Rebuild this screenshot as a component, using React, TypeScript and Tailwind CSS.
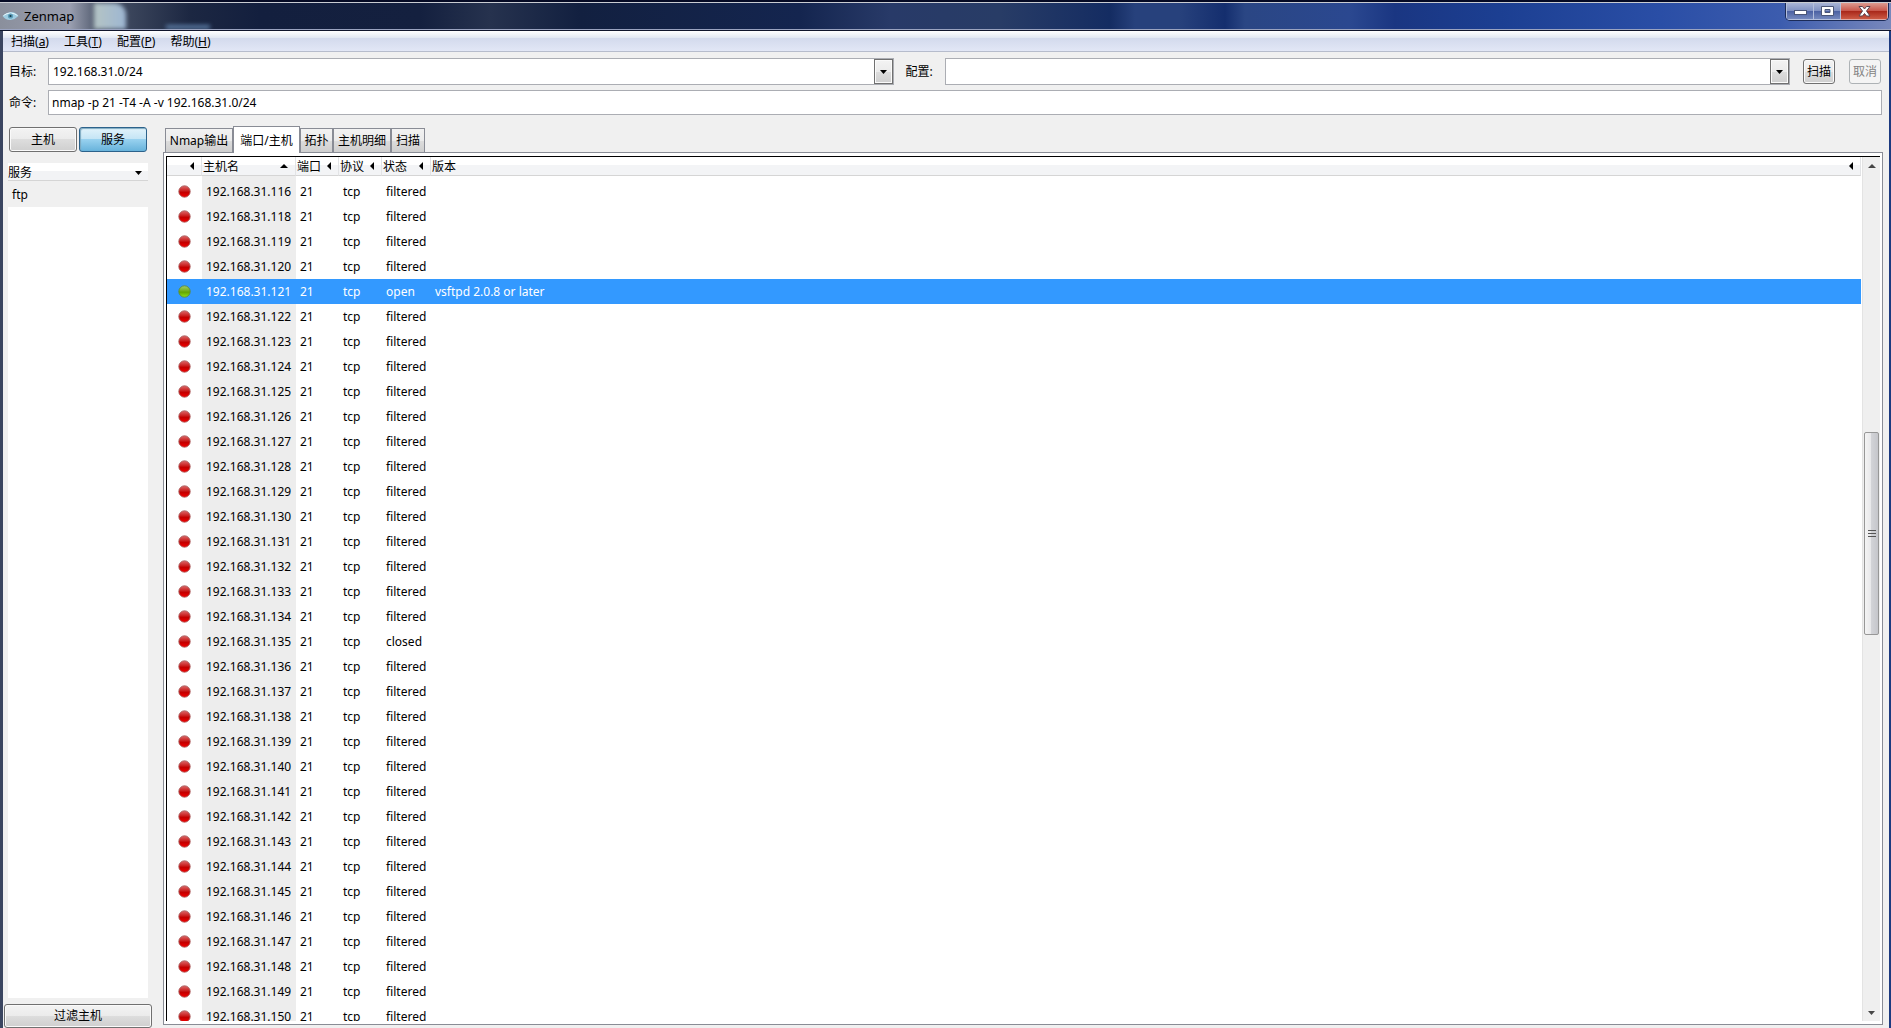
import React, { useState } from "react";

interface PortRow {
  host: string;
  port: string;
  protocol: string;
  state: string;
  version: string;
}

const rows: PortRow[] = [116, 118, 119, ...Array.from({ length: 31 }, (_, i) => 120 + i)].map((n) => ({
  host: `192.168.31.${n}`,
  port: "21",
  protocol: "tcp",
  state: n === 121 ? "open" : n === 135 ? "closed" : "filtered",
  version: n === 121 ? "vsftpd 2.0.8 or later" : "",
}));

const menus = [
  { label: "扫描", hotkey: "a" },
  { label: "工具", hotkey: "T" },
  { label: "配置", hotkey: "P" },
  { label: "帮助", hotkey: "H" },
];

const tabs = [
  { label: "Nmap输出", width: "w-[68px]" },
  { label: "端口/主机", width: "w-[67px]" },
  { label: "拓扑", width: "w-[33px]" },
  { label: "主机明细", width: "w-[58px]" },
  { label: "扫描", width: "w-[34px]" },
];

const buttonLook =
  "rounded-[3px] border border-[#707070] bg-[linear-gradient(#f3f3f3,#ebebeb_50%,#dddddd_50%,#cfcfcf)] shadow-[inset_0_0_0_1px_#fafafa]";

function DownArrow() {
  return (
    <svg width="7" height="4" viewBox="0 0 7 4" aria-hidden="true">
      <path d="M0 0h7L3.5 4z" fill="#000" />
    </svg>
  );
}

function LeftArrow() {
  return (
    <svg width="4" height="8" viewBox="0 0 4 8" aria-hidden="true" className="shrink-0">
      <path d="M4 0v8L0 4z" fill="#000" />
    </svg>
  );
}

function UpArrow() {
  return (
    <svg width="8" height="4" viewBox="0 0 8 4" aria-hidden="true" className="shrink-0">
      <path d="M0 4h8L4 0z" fill="#000" />
    </svg>
  );
}

function StateDot({ open }: { open: boolean }) {
  const id = open ? "dot-open" : "dot-shut";
  return (
    <svg width="13" height="13" viewBox="0 0 13 13" className="mx-auto block" role="img" aria-label={open ? "open" : "not open"}>
      <defs>
        <linearGradient id={id} x1="0" y1="0" x2="0" y2="1">
          <stop offset="0" stopColor={open ? "#a4cc6c" : "#dd6a6a"} />
          <stop offset="0.48" stopColor={open ? "#6fae14" : "#c81818"} />
          <stop offset="0.55" stopColor={open ? "#62a400" : "#c00000"} />
          <stop offset="1" stopColor={open ? "#8ee418" : "#f40000"} />
        </linearGradient>
      </defs>
      <circle cx="6.5" cy="6.5" r="5.7" fill={`url(#${id})`} stroke={open ? "#5c8a3c" : "#a86060"} strokeWidth="0.9" />
    </svg>
  );
}

function TitleBar() {
  return (
    <header className="h-[31px] shrink-0 border-t-2 border-b border-t-[#050a24] border-b-[#10162c] bg-[linear-gradient(90deg,#8a8f9c_0,#9a9fb0_70px,#4a5468_100px,#1c2742_190px,#131f3e_260px,#14203f_420px,#26324e_490px,#122040_580px,#14254f_800px,#283a68_890px,#283c66_1000px,#142c62_1110px,#27417c_1135px,#27417c_1180px,#142e6e_1225px,#2a4684_1245px,#2b4890_1350px,#1a3682_1395px,#1c3f92_1500px,#2a4ea6_1660px,#3c5cae_1780px,#7888bc_100%)]">
      <div className="flex h-full items-start justify-between overflow-hidden border-y border-t-[#c9ccd2] border-b-[#9aa3c0]">
        <div className="flex h-full items-center">
          <svg width="17" height="10" viewBox="0 0 17 10" className="ml-[2px]" aria-hidden="true">
            <path d="M.5 5Q4 1.500 8.500 1T16.500 5Q13 8.500 8.500 9T.5 5z" fill="#9fcde2" />
            <path d="M1.500 4.500Q5 2 8.500 2T15.500 4.500" fill="none" stroke="#e4f4fa" />
            <circle cx="8.500" cy="5" r="2.600" fill="#5b9db9" />
            <circle cx="8.500" cy="5" r="1.100" fill="#1b3c4c" />
          </svg>
          <h1 className="ml-[5px] text-[13px] leading-4 text-black">Zenmap</h1>
          <div className="ml-5 h-full w-8 rounded-tr-xl bg-gradient-to-r from-[#b5c4c4] to-[#9db6d2] blur-[2px]" />
          <div className="ml-10 h-1 w-11 self-end bg-[#5b7ba4] blur-[2px]" />
        </div>
        <div className="mr-[2px] flex h-[18px] overflow-hidden rounded-b-[5px] border border-t-0 border-[#1b2b58]">
          <button aria-label="minimize" className="flex w-[28px] items-center justify-center border border-t-0 border-[#b4bfdc] bg-[linear-gradient(#a9b5d6,#8091c2_48%,#4a60a2_50%,#7488bd)]">
            <svg width="13" height="6" viewBox="0 0 13 6" className="mt-1">
              <rect x="0.500" y="0.500" width="12" height="4" fill="#fff" stroke="#4b5677" />
            </svg>
          </button>
          <button aria-label="maximize" className="flex w-[27px] items-center justify-center border border-t-0 border-l-0 border-[#b4bfdc] bg-[linear-gradient(#a9b5d6,#8091c2_48%,#4a60a2_50%,#7488bd)]">
            <svg width="13" height="11" viewBox="0 0 13 11">
              <path d="M.5.5h12v9H.5zM4 3.500v3h5v-3z" fill="#fff" fillRule="evenodd" stroke="#4b5677" />
            </svg>
          </button>
          <button aria-label="close" className="flex w-[47px] items-center justify-center border border-t-0 border-l-0 border-[#e0a9a4] bg-[linear-gradient(#dc9a90,#c8584c_48%,#a82618_50%,#cc5a44)]">
            <svg width="13" height="11" viewBox="0 0 13 11">
              <path d="M1 .5h3.500l2 2.500 2-2.500H12L8.500 5l3.500 5H8.500l-2-2.500-2 2.500H1l3.500-5z" fill="#fff" stroke="#5a4450" />
            </svg>
          </button>
        </div>
      </div>
    </header>
  );
}

function ComboBox({ id, value, onChange, label }: { id: string; value: string; onChange: (v: string) => void; label: string }) {
  return (
    <div className="flex h-[27px] min-w-0 flex-1 border border-[#abadb3] bg-white">
      <input id={id} value={value} onChange={(e) => onChange(e.target.value)} className="min-w-0 flex-1 px-1 outline-none" />
      <button aria-label={label} className="flex w-[19px] items-center justify-center border border-[#707070] bg-[linear-gradient(#f3f3f3,#ebebeb_50%,#dddddd_50%,#cfcfcf)] shadow-[inset_0_0_0_1px_#fafafa]">
        <DownArrow />
      </button>
    </div>
  );
}

function Sidebar() {
  return (
    <aside className="flex w-[148px] shrink-0 flex-col">
      <div className="ml-[5px] flex h-[25px] gap-[2px]">
        <button className={`w-[68px] ${buttonLook}`}>主机</button>
        <button className="w-[68px] rounded-[3px] border border-[#2c628b] bg-[linear-gradient(#e2f3fb,#c3e4f5_50%,#98d1ef_50%,#68b3db)] shadow-[inset_1px_1px_1px_#7da9c0]">
          服务
        </button>
      </div>
      <div className="mx-1 mt-[11px] flex min-h-0 flex-1 flex-col">
        <button className="flex h-[18px] shrink-0 items-center justify-between border-b border-[#d5d5d5] bg-[linear-gradient(#ffffff_50%,#f2f3f5_50%)] pt-[2px] pr-[6px]">
          服务
          <DownArrow />
        </button>
        <div className="h-[26px] shrink-0 px-1 leading-[28px]">ftp</div>
        <div className="flex-1 bg-white" />
      </div>
      <button className={`mt-[6px] h-[24px] shrink-0 ${buttonLook}`}>过滤主机</button>
    </aside>
  );
}

function ScrollBar() {
  return (
    <div className="flex w-[18px] shrink-0 flex-col border-l border-[#e3e3e3] bg-[#efefef] px-[1px]">
      <button aria-label="scroll up" className="flex h-[17px] items-center justify-center opacity-70">
        <UpArrow />
      </button>
      <div className="flex-[259]" />
      <div className="flex flex-[201] flex-col items-center justify-center gap-[2px] rounded-[2px] border border-[#979797] bg-[linear-gradient(90deg,#f4f4f4,#e8e8ea_45%,#d2d3d7_50%,#c5c6cb)]">
        <div className="h-px w-2 bg-[#555]" />
        <div className="h-px w-2 bg-[#555]" />
        <div className="h-px w-2 bg-[#555]" />
      </div>
      <div className="flex-[370]" />
      <button aria-label="scroll down" className="flex h-[17px] items-center justify-center opacity-70">
        <DownArrow />
      </button>
    </div>
  );
}

function HeaderCell({ label, arrow }: { label: string; arrow: React.ReactNode }) {
  return (
    <th className="h-[19px] border-r border-b border-r-[#e3e4e6] border-b-[#d5d5d5] bg-[linear-gradient(#ffffff_45%,#f3f4f6_45%)] p-0 font-normal">
      <div className="flex h-[18px] items-center justify-between pr-[7px] pl-px">
        <span className="pt-[2px]">{label}</span>
        {arrow}
      </div>
    </th>
  );
}

function PortTable() {
  const [selected, setSelected] = useState("192.168.31.121");

  return (
    <div className="min-w-0 flex-1 overflow-hidden">
      <table className="w-full table-fixed border-separate border-spacing-0 text-left">
        <colgroup>
          <col className="w-[35px]" />
          <col className="w-[94px]" />
          <col className="w-[43px]" />
          <col className="w-[43px]" />
          <col className="w-[49px]" />
          <col />
        </colgroup>
        <thead>
          <tr>
            <HeaderCell label="" arrow={<LeftArrow />} />
            <HeaderCell label="主机名" arrow={<UpArrow />} />
            <HeaderCell label="端口" arrow={<LeftArrow />} />
            <HeaderCell label="协议" arrow={<LeftArrow />} />
            <HeaderCell label="状态" arrow={<LeftArrow />} />
            <HeaderCell label="版本" arrow={<LeftArrow />} />
          </tr>
        </thead>
        <tbody>
          <tr aria-hidden="true">
            <td className="h-[3px] p-0" />
            <td className="h-[3px] bg-[#ededed] p-0" />
          </tr>
          {rows.map((row) => {
            const active = row.host === selected;
            return (
              <tr key={row.host} onClick={() => setSelected(row.host)} className={active ? "bg-[#3399ff] text-white" : "bg-white"}>
                <td className="h-[25px] p-0">
                  <StateDot open={row.state === "open"} />
                </td>
                <td className={active ? "p-0 pl-1" : "bg-[#ededed] p-0 pl-1"}>{row.host}</td>
                <td className="p-0 pl-1">{row.port}</td>
                <td className="p-0 pl-1">{row.protocol}</td>
                <td className="p-0 pl-1">{row.state}</td>
                <td className="p-0 pl-1">{row.version}</td>
              </tr>
            );
          })}
        </tbody>
      </table>
    </div>
  );
}

export default function App() {
  const [target, setTarget] = useState("192.168.31.0/24");
  const [profile, setProfile] = useState("");
  const [command, setCommand] = useState("nmap -p 21 -T4 -A -v 192.168.31.0/24");
  const [activeTab, setActiveTab] = useState("端口/主机");

  return (
    <div className="flex h-screen flex-col overflow-hidden bg-[#1b3f8c] font-['Noto_Sans','Noto_Sans_CJK_SC',sans-serif] text-[12px] leading-[18px] text-black">
      <TitleBar />
      <div className="flex min-h-0 flex-1 flex-col border-r-2 border-l-[3px] border-l-[#3a4560] border-r-[#1c3a80] bg-[#f0f0f0]">
        <nav className="flex h-[21px] shrink-0 items-center gap-[15px] border-b border-[#b6bccc] bg-[linear-gradient(#ffffff,#e3e9f3_33%,#d3daed_35%,#e2e7f6)] pt-[2px] pl-2">
          {menus.map((menu) => (
            <button key={menu.label}>
              {menu.label}(<span className="underline">{menu.hotkey}</span>)
            </button>
          ))}
        </nav>

        <div className="mt-[6px] flex h-[27px] shrink-0 items-center pr-[8px] pl-[6px]">
          <label htmlFor="target" className="w-[39px]">目标:</label>
          <ComboBox id="target" value={target} onChange={setTarget} label="target list" />
          <label htmlFor="profile" className="ml-3 w-[39px]">配置:</label>
          <ComboBox id="profile" value={profile} onChange={setProfile} label="profile list" />
          <button className={`ml-[13px] h-[25px] w-8 ${buttonLook}`}>扫描</button>
          <button disabled className="ml-[14px] h-[25px] w-8 rounded-[3px] border border-[#adb2b5] bg-[#f4f4f4] text-[#838383]">取消</button>
        </div>
        <div className="mt-[5px] flex h-[25px] shrink-0 items-center pr-[7px] pl-[6px]">
          <label htmlFor="command" className="w-[39px]">命令:</label>
          <input
            id="command"
            value={command}
            onChange={(e) => setCommand(e.target.value)}
            className="h-[25px] min-w-0 flex-1 border border-[#abadb3] bg-white px-[3px] outline-none"
          />
        </div>

        <div className="mt-[12px] flex min-h-0 flex-1 gap-[11px] pl-px">
          <Sidebar />
          <main className="mr-[6px] mb-[3px] flex min-w-0 flex-1 flex-col">
            <div role="tablist" className="-mt-px -mb-px flex h-[27px] shrink-0 items-end pl-[2px]">
              {tabs.map((tab) => {
                const look =
                  tab.label === activeTab
                    ? "z-10 h-[27px] border-b-0 bg-white"
                    : "h-[25px] bg-[linear-gradient(#f2f2f2,#ebebeb_50%,#dddddd_50%,#cfcfcf)]";
                return (
                  <button
                    key={tab.label}
                    role="tab"
                    aria-selected={tab.label === activeTab}
                    onClick={() => setActiveTab(tab.label)}
                    className={`border border-[#898c95] pt-px whitespace-nowrap ${tab.width} ${look}`}
                  >
                    {tab.label}
                  </button>
                );
              })}
            </div>
            <div className="flex min-h-0 flex-1 border border-[#898c95] bg-white p-[2px] pt-[3px] pb-[3px]">
              <div className="flex min-w-0 flex-1 gap-px border-t border-l border-black">
                <PortTable />
                <ScrollBar />
              </div>
            </div>
          </main>
        </div>
      </div>
    </div>
  );
}
